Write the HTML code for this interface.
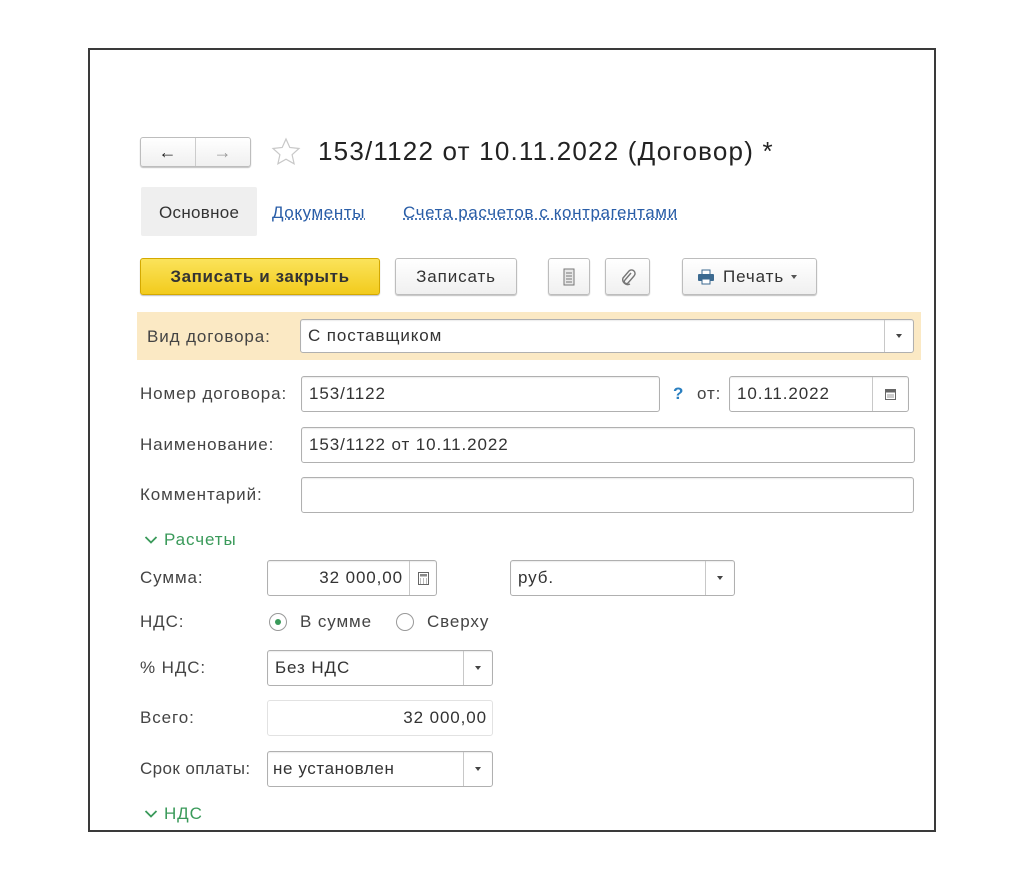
<!DOCTYPE html>
<html><head><meta charset="utf-8"><style>
*{box-sizing:border-box;margin:0;padding:0}
body{width:1024px;height:881px;background:#fff;font-family:"Liberation Sans",Arial,sans-serif;color:#333;position:relative;overflow:hidden;font-size:17px;letter-spacing:0.9px}
.a{position:absolute}
.frame{left:88px;top:48px;width:848px;height:784px;border:2px solid #3a3a3a}
.btn{position:absolute;border:1px solid #bdbdbd;border-radius:3px;background:linear-gradient(#fff,#f0f0f0);box-shadow:0 1px 1px rgba(0,0,0,.25);display:flex;align-items:center;justify-content:center;font-size:17px;color:#333}
.inp{position:absolute;border:1px solid #b0b0b0;border-radius:3px;background:#fff;box-shadow:inset 0 1px 1px rgba(0,0,0,.08);font-size:17px;color:#333;padding-left:7px;display:flex;align-items:center;white-space:nowrap}
.dd{position:absolute;right:0;top:0;bottom:0;width:29px;border-left:1px solid #c8c8c8;display:flex;align-items:center;justify-content:center}
.dd:after{content:"";border-left:3.5px solid transparent;border-right:3.5px solid transparent;border-top:4px solid #444}
.lbl{position:absolute;font-size:17px;color:#444;white-space:nowrap}
.lnk{position:absolute;color:#2a5ea8;text-decoration:underline;text-decoration-style:dotted;font-size:17px;white-space:nowrap}
.grn{position:absolute;color:#3a9a5a;font-size:17px}
</style></head><body>
<div class="a frame"></div>

<div class="btn" style="left:140px;top:137px;width:111px;height:30px">
 <span style="width:55px;text-align:center;font-size:18px;color:#222;font-weight:bold">&#x2190;</span>
 <span style="width:1px;height:28px;background:#ccc"></span>
 <span style="width:55px;text-align:center;font-size:18px;color:#999;font-weight:bold">&#x2192;</span>
</div>
<svg class="a" style="left:271px;top:137px" width="30" height="30" viewBox="0 0 30 30"><path d="M15 2l3.8 8.5 9.2 1-6.9 6.2 2 9.1L15 22.2l-8.1 4.6 2-9.1L2 11.5l9.2-1z" fill="none" stroke="#c8c8c8" stroke-width="1.2"/></svg>
<div class="a" style="left:318px;top:136px;font-size:26px;color:#222;letter-spacing:1.2px;white-space:nowrap">153/1122 от 10.11.2022 (Договор) *</div>

<div class="a" style="left:141px;top:187px;width:116px;height:49px;background:#efefef;border-radius:2px"></div>
<div class="lbl" style="left:159px;top:203px;color:#333;letter-spacing:0.3px">Основное</div>
<div class="lnk" style="left:272px;top:203px;letter-spacing:0.6px">Документы</div>
<div class="lnk" style="left:403px;top:203px;letter-spacing:0.6px">Счета расчетов с контрагентами</div>

<div class="btn" style="left:140px;top:258px;width:240px;height:37px;background:linear-gradient(#fbe35a,#f2cb1d);border-color:#d4a900;font-weight:bold;color:#333;letter-spacing:0.6px">Записать и закрыть</div>
<div class="btn" style="left:395px;top:258px;width:122px;height:37px">Записать</div>
<div class="btn" style="left:548px;top:258px;width:42px;height:37px"><svg width="12" height="18"><rect x="1" y="1" width="10" height="16" fill="#e8e8e8" stroke="#777"/><path d="M3 5h6M3 8h6M3 11h6M3 14h6" stroke="#777"/></svg></div>
<div class="btn" style="left:605px;top:258px;width:45px;height:37px"><svg width="16" height="18" viewBox="0 0 16 18"><path d="M11 5l-6 7a2 2 0 0 0 3 3l6-7a3.5 3.5 0 0 0-5-5l-6 7a5 5 0 0 0 7 6" fill="none" stroke="#777" stroke-width="1.4"/></svg></div>
<div class="btn" style="left:682px;top:258px;width:135px;height:37px;justify-content:flex-start;padding-left:14px"><svg width="18" height="16" viewBox="0 0 18 16"><rect x="5" y="1" width="8" height="5" fill="#fff" stroke="#3c6a90"/><rect x="1" y="5" width="16" height="7" rx="1" fill="#3c6a90"/><rect x="5" y="10" width="8" height="5" fill="#fff" stroke="#3c6a90"/></svg><span style="margin-left:8px">Печать</span><span style="margin-left:7px;border-left:3.5px solid transparent;border-right:3.5px solid transparent;border-top:4px solid #555"></span></div>

<div class="a" style="left:137px;top:312px;width:784px;height:48px;background:#fbe9c4"></div>
<div class="lbl" style="left:147px;top:327px">Вид договора:</div>
<div class="inp" style="left:300px;top:319px;width:614px;height:34px">С поставщиком<div class="dd"></div></div>

<div class="lbl" style="left:140px;top:384px">Номер договора:</div>
<div class="inp" style="left:301px;top:376px;width:359px;height:36px">153/1122</div>
<div class="a" style="left:673px;top:384px;color:#2a7fc0;font-weight:bold;font-size:17px">?</div>
<div class="lbl" style="left:697px;top:384px">от:</div>
<div class="inp" style="left:729px;top:376px;width:180px;height:36px">10.11.2022<div class="dd" style="width:36px"><svg width="11" height="12" viewBox="0 0 11 12" style="position:absolute"><rect x="0.5" y="1.5" width="10" height="10" fill="#fff" stroke="#666"/><rect x="0.5" y="1.5" width="10" height="3" fill="#666"/><path d="M2 7h7M2 9h7" stroke="#999"/></svg></div></div>

<div class="lbl" style="left:140px;top:435px">Наименование:</div>
<div class="inp" style="left:301px;top:427px;width:614px;height:36px">153/1122 от 10.11.2022</div>

<div class="lbl" style="left:140px;top:485px">Комментарий:</div>
<div class="inp" style="left:301px;top:477px;width:613px;height:36px"></div>

<div class="grn" style="left:144px;top:530px"><svg width="14" height="10" style="margin-right:6px"><path d="M1.5 2l5.5 5.5L12.5 2" fill="none" stroke="#3a9a5a" stroke-width="1.8"/></svg>Расчеты</div>

<div class="lbl" style="left:140px;top:568px">Сумма:</div>
<div class="inp" style="left:267px;top:560px;width:170px;height:36px;justify-content:flex-end;padding-right:33px">32 000,00<div class="dd" style="width:27px"><svg width="11" height="13" viewBox="0 0 11 13" style="position:absolute"><rect x="0.5" y="0.5" width="10" height="12" fill="#fff" stroke="#666"/><rect x="2" y="2" width="7" height="2.5" fill="#888"/><path d="M2 7h1M5 7h1M8 7h1M2 9h1M5 9h1M8 9h1M2 11h1M5 11h1M8 11h1" stroke="#777"/></svg></div></div>
<div class="inp" style="left:510px;top:560px;width:225px;height:36px">руб.<div class="dd"></div></div>

<div class="lbl" style="left:140px;top:612px">НДС:</div>
<div class="a" style="left:269px;top:613px;width:18px;height:18px;border:1px solid #999;border-radius:50%;background:#fff"></div>
<div class="a" style="left:275px;top:619px;width:6px;height:6px;border-radius:50%;background:#3a9a5a"></div>
<div class="lbl" style="left:300px;top:612px">В сумме</div>
<div class="a" style="left:396px;top:613px;width:18px;height:18px;border:1px solid #999;border-radius:50%;background:#fff"></div>
<div class="lbl" style="left:427px;top:612px">Сверху</div>

<div class="lbl" style="left:140px;top:658px">% НДС:</div>
<div class="inp" style="left:267px;top:650px;width:226px;height:36px">Без НДС<div class="dd"></div></div>

<div class="lbl" style="left:140px;top:708px">Всего:</div>
<div class="inp" style="left:267px;top:700px;width:226px;height:36px;justify-content:flex-end;padding-right:5px;border-color:#e2e2e2;box-shadow:none">32 000,00</div>

<div class="lbl" style="left:140px;top:759px;letter-spacing:0.4px">Срок оплаты:</div>
<div class="inp" style="left:267px;top:751px;width:226px;height:36px;padding-left:5px;letter-spacing:0.6px">не установлен<div class="dd"></div></div>

<div class="grn" style="left:144px;top:804px"><svg width="14" height="10" style="margin-right:6px"><path d="M1.5 2l5.5 5.5L12.5 2" fill="none" stroke="#3a9a5a" stroke-width="1.8"/></svg>НДС</div>
</body></html>
